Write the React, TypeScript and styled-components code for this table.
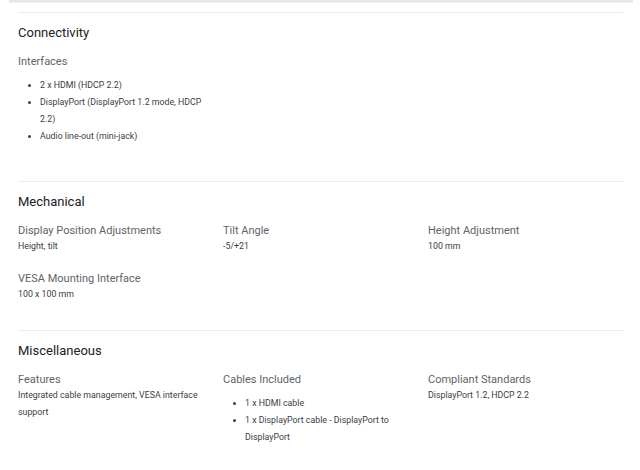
import React from 'react'
import styled, { createGlobalStyle } from 'styled-components'

const GlobalStyle = createGlobalStyle`
  body {
    margin: 0;
    background: #ffffff;
    font-family: Roboto, "Liberation Sans", Arial, sans-serif;
  }
`

const Page = styled.div`
  width: 640px;
  height: 470px;
  overflow: hidden;
  background: #ffffff;
`

const CardEdge = styled.div`
  height: 2px;
  margin: 0 7px 0 9px;
  background: #e6e6e6;
  border-bottom: 1px solid #f2f2f2;
`

const Content = styled.div`
  margin: 9px 17px 0 18px;
`

const Section = styled.section`
  border-top: 1px solid #ececec;
  padding: 11px 0 27px;
`

const SectionTitle = styled.h2`
  font-size: 13px;
  line-height: 18px;
  font-weight: 400;
  color: #212121;
  margin: 0 0 12px;
`

const Grid = styled.div`
  display: grid;
  grid-template-columns: repeat(3, 205px);
  row-gap: 16px;
`

const Spec = styled.div`
  padding-right: 10px;
`

const Label = styled.div`
  font-size: 11px;
  line-height: 15px;
  color: #5f6368;
`

const Value = styled.div`
  font-size: 8.8px;
  line-height: 17px;
  color: #3c4043;
`

const List = styled.ul`
  margin: 8px 0 9px;
  padding-left: 22px;
  font-size: 8.8px;
  line-height: 17px;
  color: #3c4043;
`

type Item = { label: string; value?: string; list?: string[] }

const sections: { title: string; items: Item[] }[] = [
  {
    title: 'Connectivity',
    items: [
      {
        label: 'Interfaces',
        list: [
          '2 x HDMI (HDCP 2.2)',
          'DisplayPort (DisplayPort 1.2 mode, HDCP 2.2)',
          'Audio line-out (mini-jack)',
        ],
      },
    ],
  },
  {
    title: 'Mechanical',
    items: [
      { label: 'Display Position Adjustments', value: 'Height, tilt' },
      { label: 'Tilt Angle', value: '-5/+21' },
      { label: 'Height Adjustment', value: '100 mm' },
      { label: 'VESA Mounting Interface', value: '100 x 100 mm' },
    ],
  },
  {
    title: 'Miscellaneous',
    items: [
      { label: 'Features', value: 'Integrated cable management, VESA interface support' },
      {
        label: 'Cables Included',
        list: ['1 x HDMI cable', '1 x DisplayPort cable - DisplayPort to DisplayPort'],
      },
      { label: 'Compliant Standards', value: 'DisplayPort 1.2, HDCP 2.2' },
    ],
  },
]

export default function App() {
  return (
    <Page>
      <GlobalStyle />
      <CardEdge />
      <Content>
        {sections.map(section => (
          <Section key={section.title}>
            <SectionTitle>{section.title}</SectionTitle>
            <Grid>
              {section.items.map(item => (
                <Spec key={item.label}>
                  <Label>{item.label}</Label>
                  {item.value && <Value>{item.value}</Value>}
                  {item.list && (
                    <List>
                      {item.list.map(entry => (
                        <li key={entry}>{entry}</li>
                      ))}
                    </List>
                  )}
                </Spec>
              ))}
            </Grid>
          </Section>
        ))}
      </Content>
    </Page>
  )
}
